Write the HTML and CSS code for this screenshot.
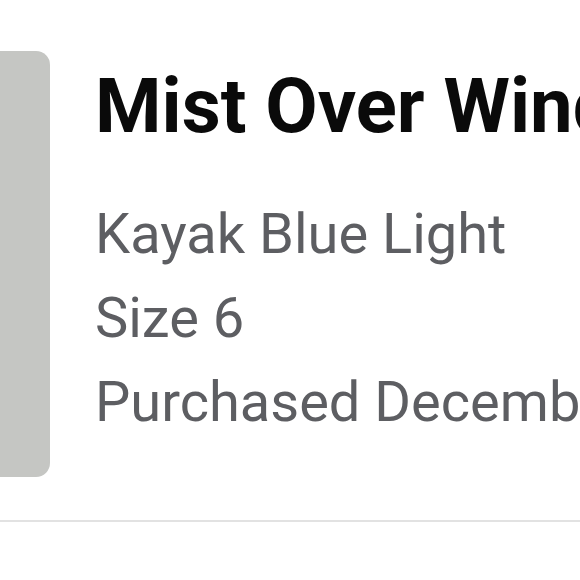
FILE: index.html
```html
<!DOCTYPE html>
<html lang="en">
<head>
    <meta charset="UTF-8">
    <meta name="viewport" content="width=device-width, initial-scale=1.0">
    <title>Order item</title>
    <link rel="stylesheet" href="styles.css">
</head>
<body>
    <div class="order-item">
        <div class="item-row">
            <div class="item-photo"></div>
            <div class="item-info">
                <h1 class="item-title">Mist Over Windward Bay</h1>
                <p class="item-meta">Kayak Blue Light</p>
                <p class="item-meta">Size 6</p>
                <p class="item-meta">Purchased December 14, 2023</p>
            </div>
        </div>
    </div>
</body>
</html>
```

FILE: styles.css
```css
* {
    margin: 0;
    padding: 0;
    box-sizing: border-box;
}

body {
    font-family: Roboto, 'Noto Sans', sans-serif;
    background: #fff;
    overflow: hidden;
}

.order-item {
    padding-top: 51px;
    padding-bottom: 43px;
    border-bottom: 2px solid #e2e2e2;
}

.item-row {
    display: flex;
    gap: 45px;
}

.item-photo {
    flex: 0 0 200px;
    height: 426px;
    margin-left: -150px;
    background: #c5c6c3;
    border-radius: 14px;
}

.item-info {
    flex: 1;
    min-width: 0;
    white-space: nowrap;
    padding-top: 11px;
}

.item-title {
    font-size: 76px;
    line-height: 88px;
    font-weight: 700;
    color: #0a0a0a;
    margin-bottom: 42px;
}

.item-meta {
    font-size: 56px;
    line-height: 84px;
    color: #5d5e62;
}
```
